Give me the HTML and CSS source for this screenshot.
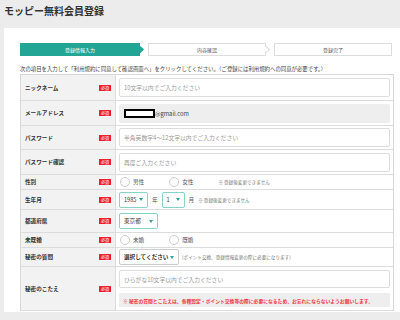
FILE: index.html
```html
<!DOCTYPE html>
<html lang="ja">
<head>
    <meta charset="UTF-8">
    <title>モッピー無料会員登録</title>
    <link rel="stylesheet" href="styles.css">
</head>
<body>
    <h1 class="page-title">モッピー無料会員登録</h1>
    <div class="panel">
        <div class="steps">
            <div class="step active">登録情報入力</div>
            <div class="step arrow">内容確認</div>
            <div class="step">登録完了</div>
        </div>
        <p class="intro">次の項目を入力して「利用規約に同意して確認画面へ」をクリックしてください。（ご登録には利用規約への同意が必要です。）</p>
        <div class="form-table">
            <div class="row h26">
                <div class="label">ニックネーム<span class="req">必須</span></div>
                <div class="field"><div class="input">10文字以内でご入力ください</div></div>
            </div>
            <div class="row h25">
                <div class="label">メールアドレス<span class="req">必須</span></div>
                <div class="field"><div class="input disabled"><span class="mask"></span>@gmail.com</div></div>
            </div>
            <div class="row h24">
                <div class="label">パスワード<span class="req">必須</span></div>
                <div class="field"><div class="input">半角英数字4〜12文字以内でご入力ください</div></div>
            </div>
            <div class="row h25">
                <div class="label">パスワード確認<span class="req">必須</span></div>
                <div class="field"><div class="input">再度ご入力ください</div></div>
            </div>
            <div class="row h15">
                <div class="label">性別<span class="req">必須</span></div>
                <div class="field inline">
                    <span class="radio"></span><span class="opt">男性</span>
                    <span class="radio"></span><span class="opt">女性</span>
                    <span class="note">※ 登録後変更できません</span>
                </div>
            </div>
            <div class="row h20">
                <div class="label">生年月<span class="req">必須</span></div>
                <div class="field inline">
                    <div class="select teal w29">1985<span class="caret"></span></div>
                    <span class="unit">年</span>
                    <div class="select teal w23">1<span class="caret"></span></div>
                    <span class="unit">月</span>
                    <span class="note">※ 登録後変更できません</span>
                </div>
            </div>
            <div class="row h23">
                <div class="label">都道府県<span class="req">必須</span></div>
                <div class="field inline">
                    <div class="select teal w39">東京都<span class="caret"></span></div>
                </div>
            </div>
            <div class="row h15">
                <div class="label">未既婚<span class="req">必須</span></div>
                <div class="field inline">
                    <span class="radio"></span><span class="opt">未婚</span>
                    <span class="radio"></span><span class="opt">既婚</span>
                </div>
            </div>
            <div class="row h19">
                <div class="label">秘密の質問<span class="req">必須</span></div>
                <div class="field inline">
                    <div class="select w60">選択してください<span class="caret"></span></div>
                    <span class="note">(ポイント交換、登録情報変更の際に必要になります)</span>
                </div>
            </div>
            <div class="row h44">
                <div class="label">秘密のこたえ<span class="req">必須</span></div>
                <div class="field stack">
                    <div class="input">ひらがな10文字以内でご入力ください</div>
                    <div class="warn">※ 秘密の質問とこたえは、各種設定・ポイント交換等の際に必要になるため、お忘れにならないようお願いします。</div>
                </div>
            </div>
        </div>
    </div>
</body>
</html>
```

FILE: styles.css
```css
body {
    margin: 0;
    background: #ececec;
    font-family: "Noto Sans CJK JP", "Noto Sans", sans-serif;
    color: #333;
    width: 400px;
    height: 320px;
    overflow: hidden;
}

.page-title {
    margin: 0;
    padding: 4px 4px 0;
    height: 24px;
    font-size: 10px;
    line-height: 14px;
    font-weight: bold;
    color: #333;
}

.panel {
    margin-left: 4px;
    background: #fff;
    padding: 15px 6px 2px 16px;
    height: 267px;
}

/* шаги */
.steps {
    display: flex;
    gap: 8px;
    height: 13px;
}

.step {
    position: relative;
    flex: 0 0 118px;
    box-sizing: border-box;
    border: 1px solid #ddd;
    font-size: 5px;
    line-height: 11px;
    text-align: center;
    color: #555;
}

.step.active {
    flex-basis: 120px;
    background: #23a596;
    border-color: #23a596;
    color: #fff;
}

.step.active::after,
.step.arrow::after {
    content: "";
    position: absolute;
    right: -4px;
    top: 3px;
    width: 5px;
    height: 5px;
    transform: rotate(45deg);
    background: #23a596;
}

.step.arrow::after {
    background: #fff;
    border-top: 1px solid #ddd;
    border-right: 1px solid #ddd;
    width: 4px;
    height: 4px;
}

.intro {
    margin: 9px 0 0;
    font-size: 5.4px;
    line-height: 8px;
    color: #444;
}

/* таблиця форми */
.form-table {
    margin-top: 1px;
    border: 1px solid #d8d8d8;
    border-bottom: none;
    width: 374px;
    box-sizing: border-box;
}

.row {
    display: grid;
    grid-template-columns: 95px 1fr;
    border-bottom: 1px solid #dcdcdc;
    box-sizing: border-box;
}

.h26 { height: 26px; }
.h25 { height: 25px; }
.h24 { height: 24px; }
.h23 { height: 23px; }
.h20 { height: 20px; }
.h19 { height: 19px; }
.h15 { height: 15px; }
.h44 { height: 44px; }

.label {
    background: #f2f2f2;
    border-right: 1px solid #dcdcdc;
    display: flex;
    justify-content: space-between;
    align-items: center;
    padding: 0 4px 0 4px;
    font-size: 5.6px;
    font-weight: bold;
    color: #333;
}

.req {
    background: #f31d2f;
    color: #fff;
    font-size: 4px;
    font-weight: normal;
    line-height: 6px;
    width: 12px;
    text-align: center;
}

.field {
    display: flex;
    align-items: center;
    padding: 0 3px 0 3px;
}

.field.inline {
    gap: 3px;
}

.field.stack {
    flex-direction: column;
    align-items: stretch;
    justify-content: center;
    gap: 5px;
}

.input {
    flex: 1;
    height: 19px;
    box-sizing: border-box;
    border: 1px solid #ddd;
    border-radius: 2px;
    display: flex;
    align-items: center;
    padding-left: 4px;
    font-size: 5.8px;
    color: #999;
}

.field.stack .input {
    flex: 0 0 18px;
}

.input.disabled {
    background: #eee;
    border-color: #eee;
    color: #444;
}

.mask {
    display: inline-block;
    width: 31px;
    height: 9px;
    box-sizing: border-box;
    border: 2px solid #000;
    background: #fff;
}

.radio {
    width: 10px;
    height: 10px;
    box-sizing: border-box;
    border: 1px solid #ccc;
    border-radius: 50%;
    margin-left: 1px;
}

.opt {
    font-size: 5.6px;
    color: #555;
    margin-right: 22px;
}

.opt + .radio {
    margin-left: 0;
}

.note {
    font-size: 4.6px;
    color: #777;
}

.unit {
    font-size: 5.6px;
    color: #555;
    margin: 0 1px;
}

.select {
    height: 16px;
    box-sizing: border-box;
    border: 1px solid #ccc;
    border-radius: 2px;
    display: flex;
    align-items: center;
    justify-content: space-between;
    padding: 0 4px;
    font-size: 5.6px;
    color: #333;
}

.select.teal {
    border-color: #86d3c9;
}

.w29 { width: 29px; }
.w23 { width: 23px; }
.w39 { width: 39px; }
.w60 { width: 60px; font-weight: bold; }

.caret {
    width: 0;
    height: 0;
    border-left: 2.5px solid transparent;
    border-right: 2.5px solid transparent;
    border-top: 3px solid #2aa596;
}

.warn {
    background: #eee;
    height: 14px;
    display: flex;
    align-items: center;
    padding-left: 4px;
    font-size: 4.8px;
    font-weight: bold;
    color: #f2343f;
}
```
